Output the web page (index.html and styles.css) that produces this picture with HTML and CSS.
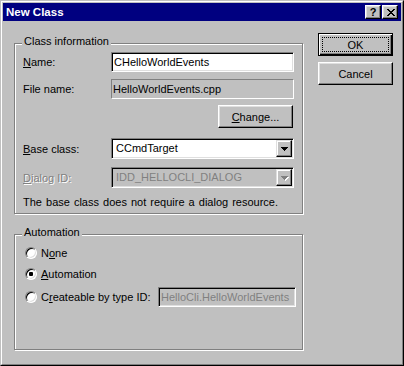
FILE: index.html
```html
<html>
<head>
  <title>New Class</title>
  <link rel="stylesheet" href="styles.css">
</head>
<body>
  <div class="window">
    <div class="frame">
      <div class="titlebar">
        <span class="title">New Class</span>
        <div class="caption-buttons">
          <div class="cap-btn help">?</div>
          <div class="cap-btn close">
            <svg width="8" height="7" viewBox="0 0 8 7" shape-rendering="crispEdges">
              <path d="M0 0h2v1H0zM6 0h2v1H6zM1 1h2v1H1zM5 1h2v1H5zM2 2h4v1H2zM3 3h2v1H3zM2 4h4v1H2zM1 5h2v1H1zM5 5h2v1H5zM0 6h2v1H0zM6 6h2v1H6z" fill="#000"/>
            </svg>
          </div>
        </div>
      </div>
      <div class="body">
        <div class="left">
          <div class="group info">
            <span class="legend">Class information</span>
            <div class="row name-row">
              <span class="label"><u>N</u>ame:</span>
              <div class="edit">CHelloWorldEvents</div>
            </div>
            <div class="row file-row">
              <span class="label">File name:</span>
              <div class="static">HelloWorldEvents.cpp</div>
            </div>
            <div class="row change-row">
              <div class="btn"><u>C</u>hange...</div>
            </div>
            <div class="row base-row">
              <span class="label"><u>B</u>ase class:</span>
              <div class="combo">
                <span class="combo-text">CCmdTarget</span>
                <div class="drop">
                  <svg width="7" height="4" viewBox="0 0 7 4" shape-rendering="crispEdges">
                    <path d="M0 0h7v1H0zM1 1h5v1H1zM2 2h3v1H2zM3 3h1v1H3z" fill="#000"/>
                  </svg>
                </div>
              </div>
            </div>
            <div class="row dialog-row">
              <span class="label disabled"><u>D</u>ialog ID:</span>
              <div class="combo off">
                <span class="combo-text">IDD_HELLOCLI_DIALOG</span>
                <div class="drop">
                  <svg width="8" height="5" viewBox="0 0 8 5" shape-rendering="crispEdges">
                    <path d="M1 1h7v1H1zM2 2h5v1H2zM3 3h3v1H3zM4 4h1v1H4z" fill="#fff"/>
                    <path d="M0 0h7v1H0zM1 1h5v1H1zM2 2h3v1H2zM3 3h1v1H3z" fill="#808080"/>
                  </svg>
                </div>
              </div>
            </div>
            <div class="note">The base class does not require a dialog resource.</div>
          </div>
          <div class="group automation">
            <span class="legend">Automation</span>
            <div class="radio-row">
              <span class="radio"></span>
              <span>N<u>o</u>ne</span>
            </div>
            <div class="radio-row">
              <span class="radio checked"><span class="dot"></span></span>
              <span><u>A</u>utomation</span>
            </div>
            <div class="radio-row type-row">
              <span class="radio"></span>
              <span>C<u>r</u>eateable by type ID:</span>
              <div class="edit off">HelloCli.HelloWorldEvents</div>
            </div>
          </div>
        </div>
        <div class="buttons">
          <div class="btn default"><span class="focus">OK</span></div>
          <div class="btn">Cancel</div>
        </div>
      </div>
    </div>
  </div>
</body>
</html>
```

FILE: styles.css
```css
body {
  margin: 0;
  background: #c0c0c0;
  font-family: "Liberation Sans", Arial, sans-serif;
  font-size: 11px;
  color: #000;
}
u {
  text-decoration-thickness: 1px;
  text-underline-offset: 1px;
}
.window {
  width: 404px;
  height: 366px;
  box-sizing: border-box;
  border: 1px solid;
  border-color: #c0c0c0 #000 #000 #c0c0c0;
}
.frame {
  height: 100%;
  box-sizing: border-box;
  border: 1px solid;
  border-color: #fff #808080 #808080 #fff;
  padding: 1px;
}
.titlebar {
  height: 18px;
  background: #000080;
  display: flex;
  align-items: center;
  padding: 0 3px 0 3px;
}
.title {
  flex: 1;
  color: #fff;
  font-weight: bold;
  font-size: 11.5px;
}
.caption-buttons {
  display: flex;
  gap: 1px;
}
.cap-btn {
  width: 16px;
  height: 14px;
  box-sizing: border-box;
  border: 1px solid;
  border-color: #fff #000 #000 #fff;
  box-shadow: inset -1px -1px 0 #808080, inset 1px 1px 0 #dfdfdf;
  background: #c0c0c0;
  display: flex;
  align-items: center;
  justify-content: center;
}
.help {
  font-weight: bold;
  font-size: 11px;
  line-height: 12px;
}
.close svg {
  margin-left: 1px;
}
.body {
  display: flex;
  padding: 12px 0 0 11px;
}
.left {
  width: 290px;
}
.group {
  position: relative;
  box-sizing: border-box;
  width: 289px;
  border: 1px solid #808080;
  box-shadow: inset 1px 1px 0 #fff, 1px 1px 0 #fff;
}
.legend {
  position: absolute;
  top: -9px;
  left: 7px;
  padding: 0 2px;
  background: #c0c0c0;
  line-height: 13px;
}
.info {
  margin-top: 10px;
  height: 171px;
  padding: 8px 8px 0 8px;
}
.row {
  display: flex;
  align-items: center;
}
.label {
  width: 88px;
}
.disabled {
  color: #808080;
  text-shadow: 1px 1px 0 #fff;
}
.edit {
  flex: 1;
  height: 20px;
  box-sizing: border-box;
  border: 1px solid;
  border-color: #808080 #fff #fff #808080;
  box-shadow: inset 1px 1px 0 #000, inset -1px -1px 0 #dfdfdf;
  background: #fff;
  padding: 0 2px;
  line-height: 18px;
  white-space: nowrap;
  overflow: hidden;
}
.edit.off {
  flex: none;
  width: 138px;
  margin-left: auto;
  background: #c0c0c0;
  color: #808080;
}
.static {
  flex: 1;
  height: 20px;
  box-sizing: border-box;
  border: 1px solid;
  border-color: #808080 #fff #fff #808080;
  padding: 0 1px;
  line-height: 18px;
}
.file-row {
  margin-top: 7px;
}
.change-row {
  margin-top: 6px;
  justify-content: flex-end;
  padding-right: 1px;
}
.base-row {
  margin-top: 10px;
}
.dialog-row {
  margin-top: 8px;
}
.combo {
  flex: 1;
  height: 21px;
  box-sizing: border-box;
  border: 1px solid;
  border-color: #808080 #fff #fff #808080;
  box-shadow: inset 1px 1px 0 #000, inset -1px -1px 0 #dfdfdf;
  background: #fff;
  padding: 1px;
  display: flex;
}
.combo.off {
  background: #c0c0c0;
  color: #808080;
}
.combo-text {
  flex: 1;
  padding-left: 3px;
  line-height: 17px;
}
.drop {
  width: 16px;
  height: 17px;
  box-sizing: border-box;
  border: 1px solid;
  border-color: #dfdfdf #000 #000 #dfdfdf;
  box-shadow: inset -1px -1px 0 #808080, inset 1px 1px 0 #fff;
  background: #c0c0c0;
  display: flex;
  align-items: center;
  justify-content: center;
}
.off .drop svg {
  margin: 1px 0 0 1px;
}
.note {
  margin-top: 8px;
  line-height: 13px;
  word-spacing: 1px;
}
.automation {
  margin-top: 20px;
  height: 116px;
  padding: 10px 6px 0 10px;
}
.radio-row {
  display: flex;
  align-items: center;
  height: 16px;
  margin-bottom: 5px;
}
.type-row {
  height: 20px;
}
.radio {
  width: 12px;
  height: 12px;
  box-sizing: border-box;
  border-radius: 50%;
  border: 1px solid;
  border-color: #808080 #fff #fff #808080;
  box-shadow: inset 1px 1px 0 #000, inset -1px -1px 0 #dfdfdf;
  background: #fff;
  margin-right: 4px;
  display: flex;
  align-items: center;
  justify-content: center;
}
.dot {
  width: 4px;
  height: 4px;
  border-radius: 1px;
  background: #000;
}
.buttons {
  margin-left: 14px;
  display: flex;
  flex-direction: column;
  gap: 6px;
}
.btn {
  width: 75px;
  height: 23px;
  box-sizing: border-box;
  border: 1px solid;
  border-color: #fff #000 #000 #fff;
  box-shadow: inset -1px -1px 0 #808080, inset 1px 1px 0 #dfdfdf;
  display: flex;
  align-items: center;
  justify-content: center;
}
.btn.default {
  border-color: #000;
  box-shadow: inset 1px 1px 0 #fff, inset -1px -1px 0 #000, inset -2px -2px 0 #808080;
  padding: 3px;
}
.focus {
  flex: 1;
  align-self: stretch;
  border: 1px dotted #000;
  display: flex;
  align-items: center;
  justify-content: center;
}
```
